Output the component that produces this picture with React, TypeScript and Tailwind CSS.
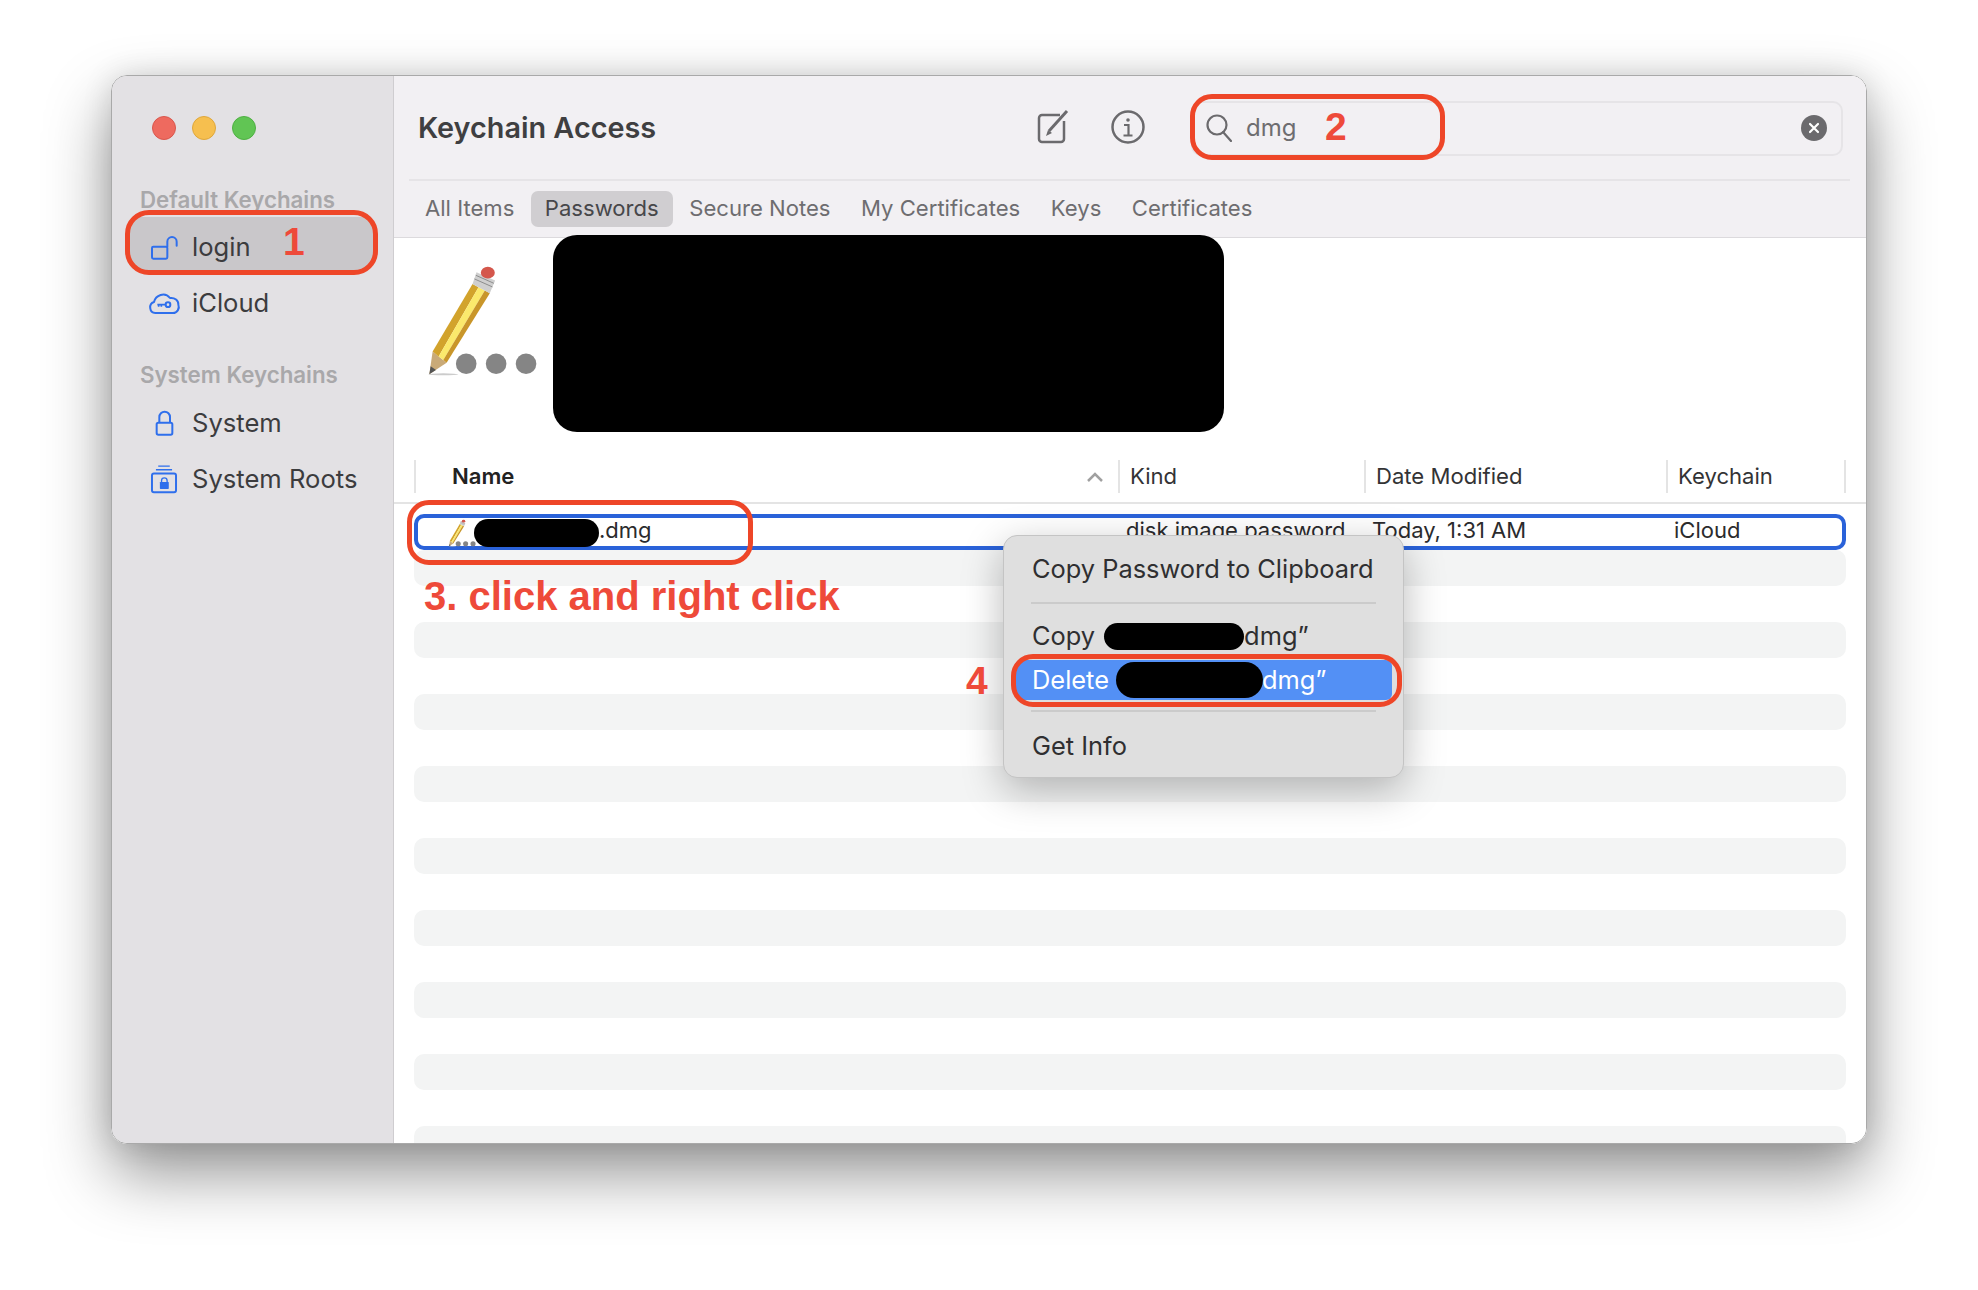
import React from "react";

const ui = "font-['Inter','Liberation_Sans',sans-serif]";
const stroke = "#2f6fec";

function Pencil({ w, h, dots }: { w: number; h: number; dots?: boolean }) {
  return (
    <svg width={w} height={h} viewBox="100 130 350 340">
      <ellipse cx="160" cy="462" rx="45" ry="3" fill="#ccc" />
      <polygon points="118,462 128,393 170,427" fill="#c9aa78" />
      <polygon points="118,462 122,438 138,449" fill="#555" />
      <polygon points="128,393 248,190 266,200 146,408" fill="#d2a32c" />
      <polygon points="146,408 266,200 285,210 160,419" fill="#fbe96c" />
      <polygon points="160,419 285,210 300,218 170,427" fill="#c9962a" />
      <polygon points="248,190 260,155 316,180 300,218" fill="#cfcfcf" />
      <line x1="254" y1="175" x2="308" y2="199" stroke="#8d8d8d" strokeWidth="3" />
      <line x1="258" y1="164" x2="312" y2="188" stroke="#8d8d8d" strokeWidth="3" />
      <ellipse cx="294" cy="156" rx="21" ry="18" fill="#d4574c" />
      {dots && (
        <g fill="#858585">
          <circle cx="229" cy="430" r="31" />
          <circle cx="319" cy="430" r="31" />
          <circle cx="409" cy="430" r="31" />
        </g>
      )}
    </svg>
  );
}

function LoginIcon() {
  return (
    <svg width="28" height="26" viewBox="180 520 84 78" fill="none" stroke={stroke} strokeWidth="6">
      <rect x="186" y="558" width="46" height="36" rx="4" />
      <path d="M232 558V543a14 14 0 0 1 28 0v12" strokeLinecap="round" />
    </svg>
  );
}
function CloudIcon() {
  return (
    <svg width="33" height="23" viewBox="172 692 99 69" fill="none" stroke={stroke} strokeWidth="6">
      <path d="M194 755a17 17 0 0 1-4-33c5-20 32-32 48-12 14-2 26 8 25 20 5 12-4 25-16 25z" strokeLinejoin="round" />
      <circle cx="232" cy="730" r="7" />
      <path d="M225 730h-25M212 730v6M204 730v6" strokeWidth="5" />
    </svg>
  );
}
function LockIcon() {
  return (
    <svg width="19" height="26" viewBox="192 1050 57 78" fill="none" stroke={stroke} strokeWidth="6">
      <rect x="197" y="1088" width="47" height="36" rx="5" />
      <path d="M205 1088v-17a16 16 0 0 1 32 0v17" />
    </svg>
  );
}
function RootsIcon() {
  return (
    <svg width="28" height="30" viewBox="180 1208 85 90" fill="none" stroke={stroke} strokeWidth="6">
      <rect x="186" y="1236" width="73" height="57" rx="6" />
      <path d="M198 1225h49M205 1214h35" strokeWidth="4" />
      <rect x="210" y="1262" width="27" height="21" rx="2" fill={stroke} stroke="none" />
      <path d="M215 1264v-6a8.500 8.500 0 0 1 17 0v6" strokeWidth="4" />
    </svg>
  );
}

function SideRow({ icon, label, active }: { icon: React.ReactNode; label: string; active?: boolean }) {
  return (
    <div className={`h-[53px] w-[243px] rounded-[8px] flex items-center pt-[7px] pl-[12px] ${active ? "bg-[#c9c7ca]" : ""}`}>
      <span className="w-[44px] flex justify-center shrink-0">{icon}</span>
      <span className="ml-[6px] text-[25.6px] text-[#3c3c3e]">{label}</span>
    </div>
  );
}

function Tab({ label, active }: { label: string; active?: boolean }) {
  return (
    <span className={`h-[36px] flex items-center px-[14px] rounded-[7px] text-[22.1px] ${active ? "bg-[#d0ced1] text-[#47474a]" : "text-[#6e6d70]"}`}>
      {label}
    </span>
  );
}

function Blot({ className }: { className: string }) {
  return <span className={`bg-black rounded-full shrink-0 ${className}`} />;
}

function Box({ className }: { className: string }) {
  return <div className={`absolute border-[5px] border-[#ee4628] ${className}`} />;
}

const ann = "absolute font-['Liberation_Sans',sans-serif] font-bold text-[#ee4a3a] leading-none";

export default function App() {
  return (
    <div className={`relative w-[1978px] h-[1290px] bg-white pl-[111px] pr-[111px] pt-[75px] ${ui}`}>
      <div className="flex h-[1069px] rounded-[16px] overflow-hidden border border-[#a9a9a9] shadow-[0_30px_65px_rgba(0,0,0,0.42),0_0_30px_rgba(0,0,0,0.12)]">
        <aside className="w-[282px] shrink-0 bg-[#e3e1e4] border-r border-[#cfcdd0] pl-[18px]">
          <div className="flex gap-[16px] pl-[22px] pt-[40px]">
            <span className="w-[24px] h-[24px] rounded-full bg-[#ee6a5f] border border-[#d9574d]" />
            <span className="w-[24px] h-[24px] rounded-full bg-[#f6bf4f] border border-[#dfa73b]" />
            <span className="w-[24px] h-[24px] rounded-full bg-[#61c554] border border-[#4fb043]" />
          </div>
          <div className="mt-[44px] pl-[10px] text-[22.3px] font-semibold text-[#a9a8aa] h-[32px] leading-[32px] whitespace-nowrap">Default Keychains</div>
          <div className="mt-[1px] flex flex-col gap-[3px]">
            <SideRow active icon={<LoginIcon />} label="login" />
            <SideRow icon={<CloudIcon />} label="iCloud" />
          </div>
          <div className="mt-[33px] pl-[10px] text-[22.3px] font-semibold text-[#a9a8aa] h-[32px] leading-[32px] whitespace-nowrap">System Keychains</div>
          <div className="flex flex-col gap-[3px] mt-[2px]">
            <SideRow icon={<LockIcon />} label="System" />
            <SideRow icon={<RootsIcon />} label="System Roots" />
          </div>
        </aside>

        <main className="flex-1 min-w-0 bg-white flex flex-col">
          <header className="h-[162px] shrink-0 bg-[#f2f0f3] border-b border-[#dcdadd] flex flex-col">
            <div className="h-[105px] mx-[15px] mr-[16px] border-b-2 border-[#e6e4e7] flex items-center pl-[9px] pr-[7px] shrink-0">
              <h1 className="text-[28.8px] font-semibold text-[#3f3f41] w-[619px] shrink-0 mt-[1px]">Keychain Access</h1>
              <svg width="36" height="38" viewBox="0 0 36 38" fill="none" stroke="#6b6a6d" strokeWidth="2.500" className="shrink-0 -mt-[2px]">
                <path d="M27 13v18a3 3 0 0 1-3 3H5a3 3 0 0 1-3-3V10a3 3 0 0 1 3-3h18" />
                <path d="M12 23 30 3" strokeWidth="3" />
                <path d="M9 28l2-6 4 3z" fill="#6b6a6d" stroke="none" />
              </svg>
              <svg width="34" height="34" viewBox="0 0 34 34" fill="none" stroke="#6b6a6d" strokeWidth="2.500" className="ml-[38px] shrink-0 -mt-[2px]">
                <circle cx="17" cy="17" r="15.500" />
                <circle cx="17" cy="10" r="1.800" fill="#6b6a6d" stroke="none" />
                <path d="M13 15h4.500v10M12.500 25.500h9" strokeWidth="2.200" />
              </svg>
              <div className="ml-[46px] flex-1 h-[55px] mt-[1px] rounded-[10px] border-2 border-[#e6e4e7] flex items-center pl-[13px] pr-[14px]">
                <svg width="26" height="28" viewBox="0 0 26 28" fill="none" stroke="#6b6a6d" strokeWidth="2.200">
                  <circle cx="11" cy="11" r="9.500" />
                  <path d="M17 18l8 9" strokeLinecap="round" />
                </svg>
                <span className="ml-[14px] text-[24px] text-[#6e6d70] flex-1">dmg</span>
                <span className="w-[26px] h-[26px] rounded-full bg-[#6b6a6d] flex items-center justify-center">
                  <svg width="12" height="12" viewBox="0 0 12 12" stroke="#fff" strokeWidth="2.200" strokeLinecap="round"><path d="M2 2l8 8M10 2l-8 8" /></svg>
                </span>
              </div>
            </div>
            <nav className="flex items-center gap-[2.5px] pl-[17px] h-[56px]">
              <Tab label="All Items" />
              <Tab active label="Passwords" />
              <Tab label="Secure Notes" />
              <Tab label="My Certificates" />
              <Tab label="Keys" />
              <Tab label="Certificates" />
            </nav>
          </header>

          <div className="h-[222px] shrink-0 relative flex">
            <div className="ml-[29px] mt-[26px]"><Pencil w={117} h={113} dots /></div>
            <div className="absolute left-[159px] top-[-3px] w-[671px] h-[197px] bg-black rounded-[24px]" />
          </div>

          <div className="h-[44px] shrink-0 border-b-2 border-[#e4e4e4] relative">
            <div className="h-[32px] ml-[20px] mr-[20px] grid grid-cols-[706px_246px_302px_178px] text-[22.1px] text-[#333335]">
              <div className="border-x-2 border-[#e4e4e4] pl-[36px] flex items-center font-semibold text-[#222] justify-between pr-[15px]">
                Name
                <svg width="16" height="10" viewBox="0 0 16 10" fill="none" stroke="#a0a0a0" strokeWidth="2.500"><path d="M1 9l7-7 7 7" /></svg>
              </div>
              <div className="border-r-2 border-[#e4e4e4] pl-[10px] flex items-center">Kind</div>
              <div className="border-r-2 border-[#e4e4e4] pl-[10px] flex items-center">Date Modified</div>
              <div className="border-r-2 border-[#e4e4e4] pl-[10px] flex items-center">Keychain</div>
            </div>
          </div>

          <div className="pt-[10px] px-[20px] flex-1 overflow-hidden flex flex-col gap-[36px]">
            <div className="h-[36px] shrink-0 rounded-[10px] border-[4px] border-[#2a62d9] grid grid-cols-[707px_247px_301px_1fr] items-center text-[22px] text-[#2b2b2d] -mb-[36px]">
              <div className="flex items-center pl-[29px] h-[28px]">
                <Pencil w={30} h={28} dots />
                <Blot className="h-[28px] w-[125px] -ml-[3px]" />
                <span className="-mt-[4px]">.dmg</span>
              </div>
              <div className="pl-[1px] whitespace-nowrap -mt-[4px]">disk image password</div>
              <div className="whitespace-nowrap -mt-[4px]">Today, 1:31 AM</div>
              <div className="pl-[1px] -mt-[4px]">iCloud</div>
            </div>
            {Array.from({ length: 10 }).map((_, i) => (
              <div key={i} className="h-[36px] shrink-0 rounded-[10px] bg-[#f3f4f4]" />
            ))}
          </div>
        </main>
      </div>

      <div className="absolute left-[1003px] top-[535px] w-[401px] h-[243px] rounded-[14px] bg-[#dfdfdf] border border-[#c4c4c4] shadow-[0_12px_40px_rgba(0,0,0,0.28)] px-[11px] text-[25.4px] text-[#2f2f31]">
        <div className="h-[66px] pl-[17px] flex items-center whitespace-nowrap">Copy Password to Clipboard</div>
        <div className="mx-[16px] h-[2px] bg-[#cbcbcb]" />
        <div className="h-[56px] pl-[17px] flex items-center whitespace-nowrap pt-[8px]">
          Copy<Blot className="h-[27px] w-[140px] ml-[9px]" />dmg”
        </div>
        <div className="h-[40px] rounded-[6px] bg-[#5390f5] text-white pl-[17px] flex items-center whitespace-nowrap">
          Delete<Blot className="h-[36px] w-[147px] ml-[7px]" />
          <span className="-ml-[1px]">dmg”</span>
        </div>
        <div className="mx-[16px] mt-[10px] h-[2px] bg-[#cbcbcb]" />
        <div className="h-[64px] pl-[17px] pt-[4px] flex items-center">Get Info</div>
      </div>

      <Box className="left-[125px] top-[210px] w-[253px] h-[65px] rounded-[24px]" />
      <Box className="left-[1190px] top-[94px] w-[255px] h-[66px] rounded-[22px]" />
      <Box className="left-[407px] top-[500px] w-[346px] h-[65px] rounded-[22px]" />
      <Box className="left-[1011px] top-[654px] w-[391px] h-[53px] rounded-[22px]" />

      <span className={`${ann} left-[283px] top-[222px] text-[39px]`}>1</span>
      <span className={`${ann} left-[1325px] top-[107px] text-[39px]`}>2</span>
      <span className={`${ann} left-[424px] top-[576px] text-[40px]`}>3. click and right click</span>
      <span className={`${ann} left-[966px] top-[661px] text-[39px]`}>4</span>
    </div>
  );
}
